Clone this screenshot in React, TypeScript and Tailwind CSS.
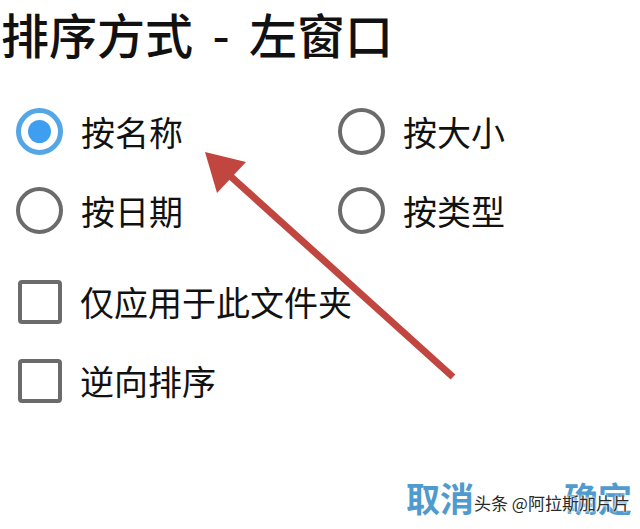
import React from "react";

const font = "font-['Noto_Sans_CJK_SC','Noto_Sans',sans-serif]";

function Radio({ checked }: { checked?: boolean }) {
  if (checked) {
    return (
      <div className="w-[47px] h-[47px] rounded-full border-[5px] border-[#55a6e6] flex items-center justify-center shrink-0">
        <div className="w-[23px] h-[23px] rounded-full bg-[#3e9ff0]" />
      </div>
    );
  }
  return <div className="w-[47px] h-[47px] rounded-full border-[4px] border-[#6b6b6b] shrink-0" />;
}

function Check() {
  return <div className="w-[44px] h-[44px] rounded-[4px] border-[4px] border-[#6b6b6b] shrink-0" />;
}

function Row({ children, label }: { children: React.ReactNode; label: string }) {
  return (
    <div className="flex items-center h-[47px]">
      {children}
      <span className="ml-[18px] text-[34px] leading-[47px] text-[#111]">{label}</span>
    </div>
  );
}

export default function App() {
  return (
    <div className={`relative w-[640px] h-[529px] bg-white overflow-hidden ${font}`}>
      <div className="pl-[1px] pt-[4px]">
        <h1 className="text-[48px] leading-[58px] font-medium text-[#111] whitespace-pre">
          排序方式<span className="inline-block w-[56px] text-center">-</span>左窗口
        </h1>
      </div>
      <div className="pl-[16px] mt-[46px]">
        <div className="grid grid-cols-[322px_1fr] gap-y-[32px]">
          <Row label="按名称"><Radio checked /></Row>
          <Row label="按大小"><Radio /></Row>
          <Row label="按日期"><Radio /></Row>
          <Row label="按类型"><Radio /></Row>
        </div>
        <div className="mt-[44px] flex flex-col gap-[32px] pl-[2px]">
          <Row label="仅应用于此文件夹"><Check /></Row>
          <Row label="逆向排序"><Check /></Row>
        </div>
      </div>
      <div className="absolute left-0 right-0 top-[476px] flex justify-end pr-[8px] gap-[90px]">
        <span className="text-[34px] leading-[44px] font-bold text-[#4f9bd0]">取消</span>
        <span className="text-[34px] leading-[44px] font-bold text-[#4f9bd0]">确定</span>
      </div>
      <div className="absolute left-[474px] top-[491px] text-[17px] leading-[24px] text-[#2a2a2a] whitespace-pre [text-shadow:0_0_2px_#fff,0_0_2px_#fff,0_0_3px_#fff]">
        头条 @阿拉斯加片片
      </div>
      <svg className="absolute left-0 top-0 pointer-events-none" width="640" height="529" viewBox="0 0 640 529">
        <line x1="453" y1="377" x2="228" y2="174" stroke="#c1463f" strokeWidth="7" />
        <polygon points="205,152 246,162 217,193" fill="#c1463f" />
      </svg>
    </div>
  );
}
